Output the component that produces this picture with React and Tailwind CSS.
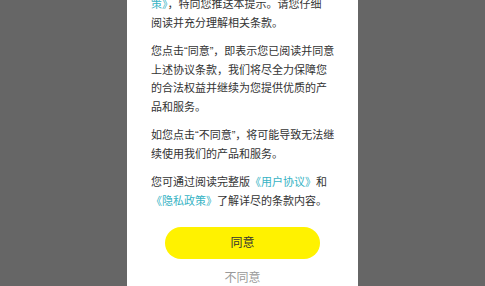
export default function App() {
  return (
    <div
      className="h-[286px] w-full overflow-hidden bg-[#666666] flex justify-center"
      style={{ fontFamily: '"Liberation Sans", "Noto Sans CJK SC", sans-serif' }}
    >
      <div className="w-[231px] bg-white pl-6 pr-[22px] text-[11px] leading-[18.5px] text-[#333333]">
        <div className="-mt-[5px] flex flex-col gap-[10px]">
          <p>
            <span className="text-[#36b3c4]">策》</span>，特向您推送本提示。请您仔细
            <br />
            阅读并充分理解相关条款。
          </p>
          <p>
            您点击“同意”，即表示您已阅读并同意上述协议条款，我们将尽全力保障您的合法权益并继续为您提供优质的产品和服务。
          </p>
          <p>如您点击“不同意”，将可能导致无法继续使用我们的产品和服务。</p>
          <p>
            您可通过阅读完整版
            <span className="text-[#36b3c4]">《用户协议》</span>和
            <span className="text-[#36b3c4]">《隐私政策》</span>了解详尽的条款内容。
          </p>
        </div>
        <div className="mt-[17px] flex flex-col items-center pr-[2px]">
          <button className="h-8 w-[155px] rounded-full bg-[#fff200] text-[12px] text-[#333333]">
            同意
          </button>
          <button className="mt-[10px] text-[12px] leading-[18px] text-[#999999]">不同意</button>
        </div>
      </div>
    </div>
  );
}
